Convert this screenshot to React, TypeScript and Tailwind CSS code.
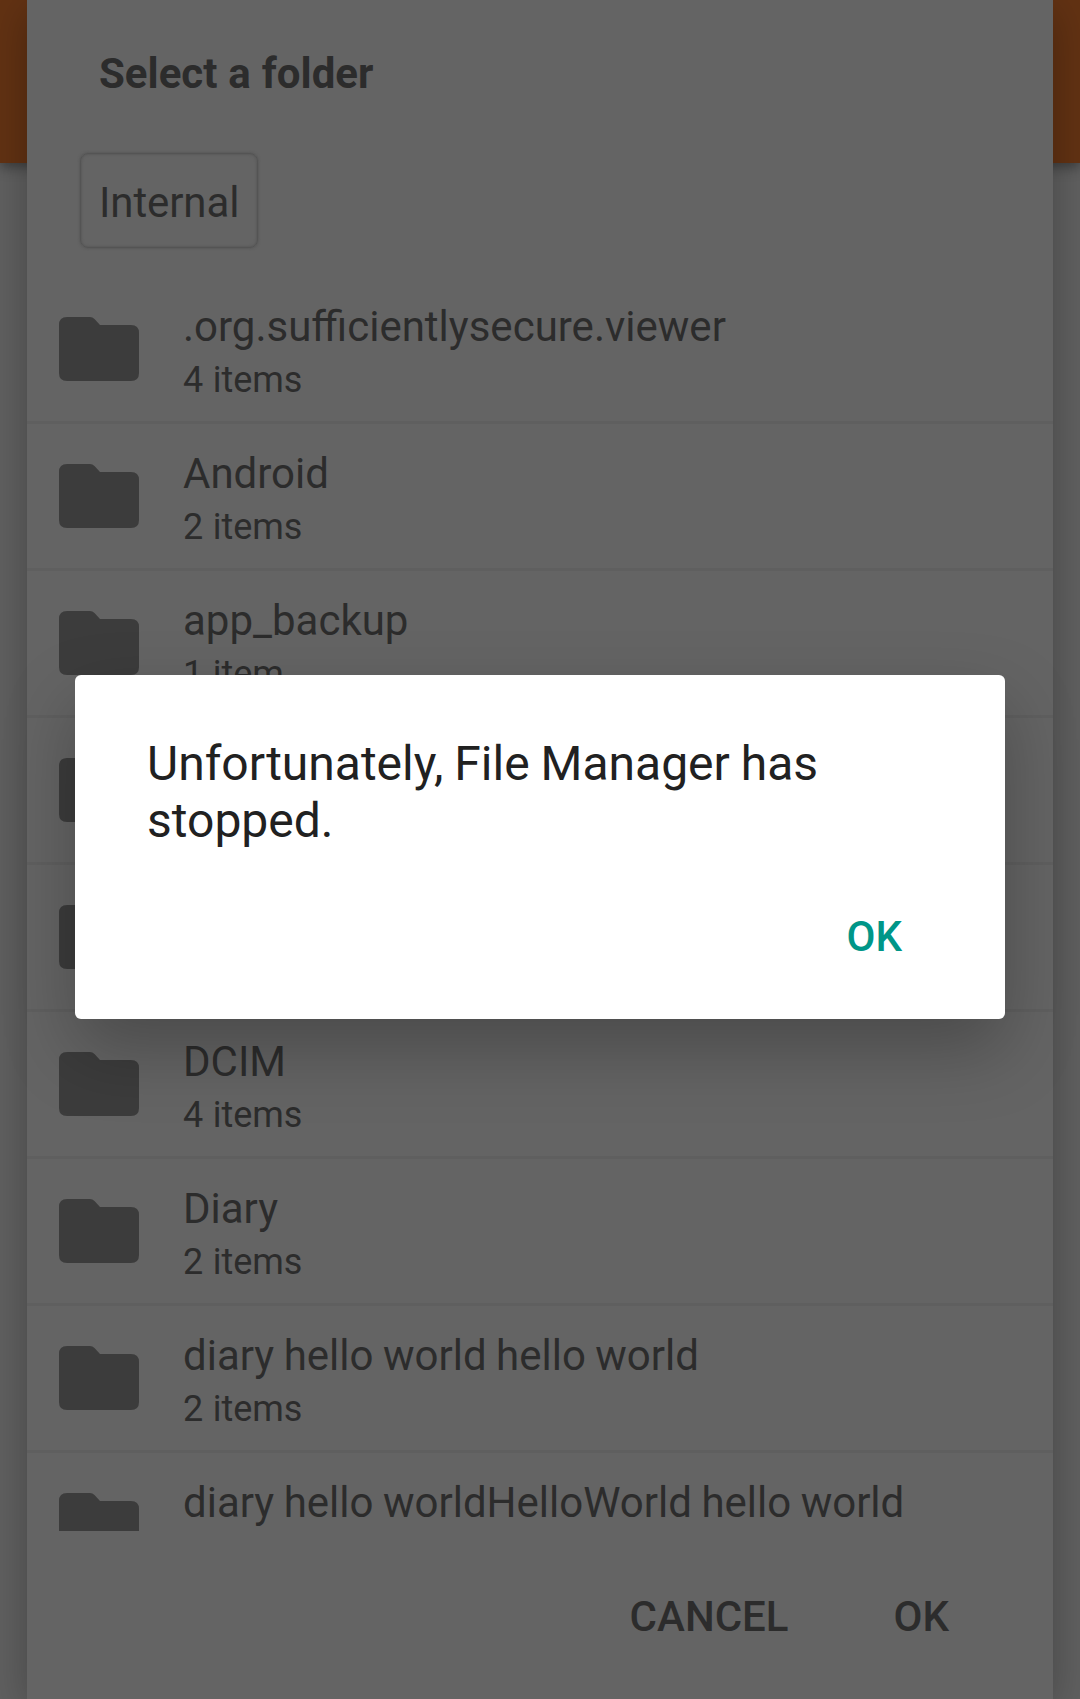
import React from "react";

type Folder = { name: string; count: string };

const folders: Folder[] = [
  { name: ".org.sufficientlysecure.viewer", count: "4 items" },
  { name: "Android", count: "2 items" },
  { name: "app_backup", count: "1 item" },
  { name: "", count: "" },
  { name: "", count: "" },
  { name: "DCIM", count: "4 items" },
  { name: "Diary", count: "2 items" },
  { name: "diary hello world hello world", count: "2 items" },
  { name: "diary hello worldHelloWorld hello world", count: "" },
];

function FolderIcon() {
  return (
    <svg className="mt-10 h-16 w-20 shrink-0" viewBox="0 0 80 64" fill="#3c3c3c">
      <path d="M8 0H31Q33.500 0 35.500 2L41 8H72Q80 8 80 16V56Q80 64 72 64H8Q0 64 0 56V8Q0 0 8 0Z" />
    </svg>
  );
}

function FolderRow({ name, count }: Folder) {
  return (
    <li className="flex h-[147px] shrink-0 border-b-[3px] border-[#5f5f5f] pl-8">
      <FolderIcon />
      <div className="ml-11 pt-[25px] whitespace-nowrap">
        <div className="h-[49px] text-[42px] leading-[49px] [word-spacing:-0.95px]">{name}</div>
        <div className="mt-2 h-[42px] text-[36px] leading-[42px] [word-spacing:0.5px]">{count}</div>
      </div>
    </li>
  );
}

function FolderPicker() {
  return (
    <section className="mx-[27px] flex h-full flex-col bg-[#646464] text-[#2c2c2c] shadow-[0_10px_40px_rgba(0,0,0,0.28)]">
      <h1 className="ml-[72px] mt-[49px] h-[49px] text-[42px] font-bold leading-[49px] [word-spacing:0.5px]">Select a folder</h1>
      <button className="ml-[53px] mt-[55px] flex h-[95px] w-[178px] rounded-lg border border-[#545454] pl-[18px] pt-6 text-[42px] leading-[49px] tracking-[-0.1px] shadow-[0_0_3px_#505050,inset_0_0_3px_#505050]">
        Internal
      </button>
      <ul className="mt-[29px] flex h-[1254px] shrink-0 flex-col overflow-hidden">
        {folders.map((folder, i) => (
          <FolderRow key={i} {...folder} />
        ))}
      </ul>
      <div className="flex justify-end gap-[105px] pr-[104px] pt-[61px] text-[42px] font-medium leading-[49px]">
        <button>CANCEL</button>
        <button>OK</button>
      </div>
    </section>
  );
}

function CrashDialog() {
  return (
    <div className="absolute left-[75px] top-[675px] flex h-[344px] w-[930px] flex-col rounded-md bg-white px-[72px] pt-[60px] shadow-[0_30px_70px_rgba(0,0,0,0.26)]">
      <p className="text-[48px] leading-[57px] text-[#212121] [word-spacing:-1px]">Unfortunately, File Manager has stopped.</p>
      <button className="mr-[31px] mt-[63px] self-end text-[42px] font-medium leading-[49px] text-[#009688]">OK</button>
    </div>
  );
}

export default function App() {
  return (
    <main className="relative h-[1699px] w-[1080px] overflow-hidden bg-[#606060] font-['Roboto',sans-serif]">
      <div className="absolute inset-x-0 top-0 h-[163px] bg-[#623213] shadow-[0_4px_12px_rgba(0,0,0,0.4)]" />
      <div className="relative h-full">
        <FolderPicker />
      </div>
      <CrashDialog />
    </main>
  );
}
